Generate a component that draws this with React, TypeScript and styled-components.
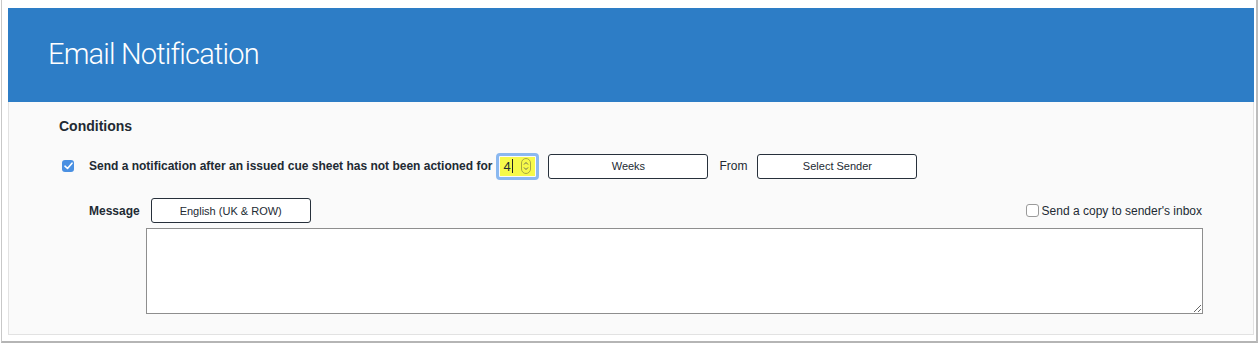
import { createGlobalStyle } from "styled-components";
import styled from "styled-components";

const Global = createGlobalStyle`
  html, body { margin: 0; padding: 0; background: #fff; }
  body { font-family: "Liberation Sans", Arial, sans-serif; color: #222a33; }
`;

const Frame = styled.div`
  width: 1257px;
  height: 343px;
  margin-left: 1px;
  padding: 8px 2px 6px 6px;
  border: 1px solid #c8c8c8;
  border-top: none;
  border-right: 2px solid #bdbdbd;
  border-bottom: 2px solid #b5b5b5;
  box-sizing: border-box;
  display: flex;
  flex-direction: column;
`;

const Panel = styled.div`
  flex: 1;
  display: flex;
  flex-direction: column;
  background: #fafafa;
`;

const Header = styled.div`
  height: 94px;
  background: #2d7dc6;
  display: flex;
  align-items: center;
  padding-left: 40px;
  padding-bottom: 2px;
  box-sizing: border-box;
`;

const Title = styled.h1`
  margin: 0;
  font-family: Roboto, "Liberation Sans", sans-serif;
  font-weight: 300;
  font-size: 29px;
  color: #fff;
  letter-spacing: -0.8px;
`;

const Body = styled.div`
  flex: 1;
  border: 1px solid #e2e2e2;
  border-top: none;
  padding: 16px 50px 0 50px;
  display: flex;
  flex-direction: column;
`;

const Heading = styled.div`
  font-weight: bold;
  font-size: 14px;
  color: #222a33;
  height: 20px;
`;

const Row = styled.div`
  display: flex;
  align-items: center;
  margin-top: 14px;
  height: 28px;
`;

const CheckedBox = styled.span`
  width: 12px;
  height: 12px;
  margin-left: 3px;
  border-radius: 3px;
  background: #4a90e2;
  display: inline-flex;
  align-items: center;
  justify-content: center;
`;

const Label = styled.span<{ $bold?: boolean; $left?: number }>`
  margin-left: ${(p) => p.$left ?? 0}px;
  font-size: 12px;
  font-weight: ${(p) => (p.$bold ? "bold" : "normal")};
  color: #222a33;
`;

const NumberBox = styled.div`
  margin-left: 4px;
  width: 43px;
  height: 27px;
  box-sizing: border-box;
  border: 3px solid #8ab8f0;
  border-radius: 4px;
  padding: 1px;
  display: flex;
`;

const NumberInner = styled.div`
  flex: 1;
  background: #f6f94a;
  display: flex;
  align-items: center;
  justify-content: space-between;
  padding: 0 4px 0 3px;
  font-size: 13px;
`;

const Caret = styled.span`
  display: flex;
  align-items: center;
  &::after {
    content: "";
    width: 1px;
    height: 14px;
    margin-left: 1px;
    background: #222;
  }
`;

const Spinner = styled.span`
  width: 8px;
  height: 14px;
  border: 1px solid #a8a840;
  border-radius: 5px;
  display: flex;
  align-items: center;
  justify-content: center;
`;

const SelectButton = styled.button<{ $left: number }>`
  margin-left: ${(p) => p.$left}px;
  width: 160px;
  height: 25px;
  background: #fff;
  border: 1px solid #27303b;
  border-radius: 3px;
  font-family: "Liberation Sans", Arial, sans-serif;
  font-size: 11px;
  color: #222a33;
  padding: 0;
`;

const MessageRow = styled.div`
  display: flex;
  align-items: center;
  margin-top: 18px;
  padding-left: 30px;
  height: 25px;
`;

const CopyOption = styled.label`
  margin-left: auto;
  margin-right: 1px;
  display: flex;
  align-items: center;
  gap: 3px;
  font-size: 12px;
  color: #222a33;
`;

const EmptyBox = styled.span`
  width: 11px;
  height: 11px;
  border: 1px solid #9a9a9a;
  border-radius: 3px;
  background: #fff;
`;

const TextArea = styled.textarea`
  margin: 5px 0 0 87px;
  width: 1057px;
  height: 86px;
  box-sizing: border-box;
  border: 1px solid #8e8e8e;
  background: #fff;
  resize: vertical;
`;

export default function App() {
  return (
    <>
      <Global />
      <Frame>
        <Panel>
          <Header>
            <Title>Email Notification</Title>
          </Header>
          <Body>
            <Heading>Conditions</Heading>
            <Row>
              <CheckedBox>
                <svg width="9" height="8" viewBox="0 0 9 8">
                  <path d="M1 4.2 L3.5 6.5 L8 1.2" fill="none" stroke="#fff" strokeWidth="1.6" strokeLinecap="round" strokeLinejoin="round" />
                </svg>
              </CheckedBox>
              <Label $bold $left={15}>
                Send a notification after an issued cue sheet has not been actioned for
              </Label>
              <NumberBox>
                <NumberInner>
                  <Caret>4</Caret>
                  <Spinner>
                    <svg width="6" height="10" viewBox="0 0 6 10">
                      <path d="M1 3.5 L3 1.5 L5 3.5 M1 6.5 L3 8.5 L5 6.5" fill="none" stroke="#555" strokeWidth="0.9" />
                    </svg>
                  </Spinner>
                </NumberInner>
              </NumberBox>
              <SelectButton $left={9}>Weeks</SelectButton>
              <Label $left={11}>From</Label>
              <SelectButton $left={10}>Select Sender</SelectButton>
            </Row>
            <MessageRow>
              <Label $bold>Message</Label>
              <SelectButton $left={11}>English (UK &amp; ROW)</SelectButton>
              <CopyOption>
                <EmptyBox />
                Send a copy to sender's inbox
              </CopyOption>
            </MessageRow>
            <TextArea />
          </Body>
        </Panel>
      </Frame>
    </>
  );
}
